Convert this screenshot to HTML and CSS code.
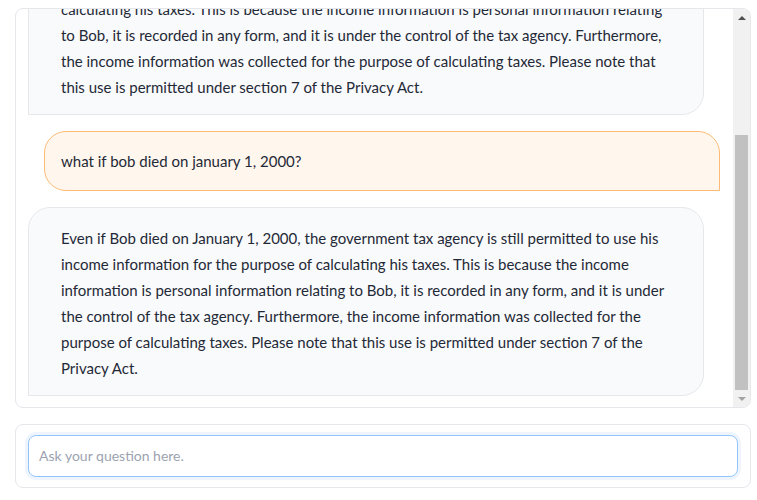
FILE: index.html
```html
<!DOCTYPE html>
<html lang="en">
<head>
<meta charset="utf-8">
<title>Chat</title>
<link rel="stylesheet" href="styles.css">
</head>
<body>
<div class="app">
  <div class="chat-panel">
    <div class="chat-scroll">
      <div class="messages">
        <div class="msg user">can the government tax agency use Bob's income information to calculate his taxes?</div>
        <div class="msg bot">Yes, the government tax agency is allowed to use Bob's income details for the purpose of calculating his taxes. This is because the income information is personal information relating to Bob, it is recorded in any form, and it is under the control of the tax agency. Furthermore, the income information was collected for the purpose of calculating taxes. Please note that this use is permitted under section 7 of the Privacy Act.</div>
        <div class="msg user">what if bob died on january 1, 2000?</div>
        <div class="msg bot">Even if Bob died on January 1, 2000, the government tax agency is still permitted to use his income information for the purpose of calculating his taxes. This is because the income information is personal information relating to Bob, it is recorded in any form, and it is under the control of the tax agency. Furthermore, the income information was collected for the purpose of calculating taxes. Please note that this use is permitted under section 7 of the Privacy Act.</div>
      </div>
    </div>
    <div class="scrollbar" aria-hidden="true">
      <div class="sb-btn"><span class="arrow-up"></span></div>
      <div class="sb-track"><div class="sb-thumb"></div></div>
      <div class="sb-btn"><span class="arrow-down"></span></div>
    </div>
  </div>
  <div class="input-panel">
    <textarea class="question" rows="1" placeholder="Ask your question here."></textarea>
  </div>
</div>
</body>
</html>
```
FILE: styles.css
```css
html, body {
  margin: 0;
  padding: 0;
  background: #ffffff;
}
body {
  font-family: "Lato", "Noto Sans", sans-serif;
  color: #1f2937;
}
.app {
  padding: 8px 6px 0 15px;
  display: flex;
  flex-direction: column;
  gap: 16px;
}
.chat-panel {
  height: 400px;
  box-sizing: border-box;
  border: 1px solid #e5e7eb;
  border-radius: 8px;
  overflow: hidden;
  display: flex;
}
.chat-scroll {
  flex: 1;
  min-width: 0;
  overflow: hidden;
  display: flex;
  flex-direction: column-reverse;
}
.messages {
  display: flex;
  flex-direction: column;
  gap: 16px;
  padding: 12px 13px 11px 12px;
}
.msg {
  width: calc(100% - 16px);
  box-sizing: border-box;
  font-size: 15px;
  line-height: 26px;
}
.bot {
  align-self: flex-start;
  background: #f9fafb;
  border: 1px solid #e5e7eb;
  border-radius: 22px 22px 22px 0;
  padding: 17px 32px 14px 32px;
}
.user {
  align-self: flex-end;
  background: #fff7ed;
  border: 1px solid #fdba74;
  border-radius: 22px 22px 0 22px;
  padding: 16px;
}
.scrollbar {
  width: 17px;
  flex: none;
  background: #f1f1f1;
  display: flex;
  flex-direction: column;
}
.sb-btn {
  height: 17px;
  flex: none;
  display: flex;
  align-items: center;
  justify-content: center;
}
.arrow-up {
  width: 0;
  height: 0;
  border-left: 4px solid transparent;
  border-right: 4px solid transparent;
  border-bottom: 4px solid #505050;
}
.arrow-down {
  width: 0;
  height: 0;
  border-left: 4px solid transparent;
  border-right: 4px solid transparent;
  border-top: 4px solid #a3a3a3;
}
.sb-track {
  flex: 1;
  display: flex;
  flex-direction: column;
  justify-content: flex-end;
  padding: 0 2px;
}
.sb-thumb {
  height: 255px;
  background: #c1c1c1;
}
.input-panel {
  border: 1px solid #e5e7eb;
  border-radius: 8px;
  padding: 10px 12px;
  display: flex;
}
.question {
  flex: 1;
  height: 42px;
  box-sizing: border-box;
  resize: none;
  border: 1px solid #93c5fd;
  border-radius: 8px;
  box-shadow: 0 0 0 3px #eef5ff;
  padding: 10px 10px;
  font-family: inherit;
  font-size: 14px;
  line-height: 20px;
  color: #1f2937;
  outline: none;
  overflow: hidden;
}
.question::placeholder {
  color: #9ca3af;
}
```
